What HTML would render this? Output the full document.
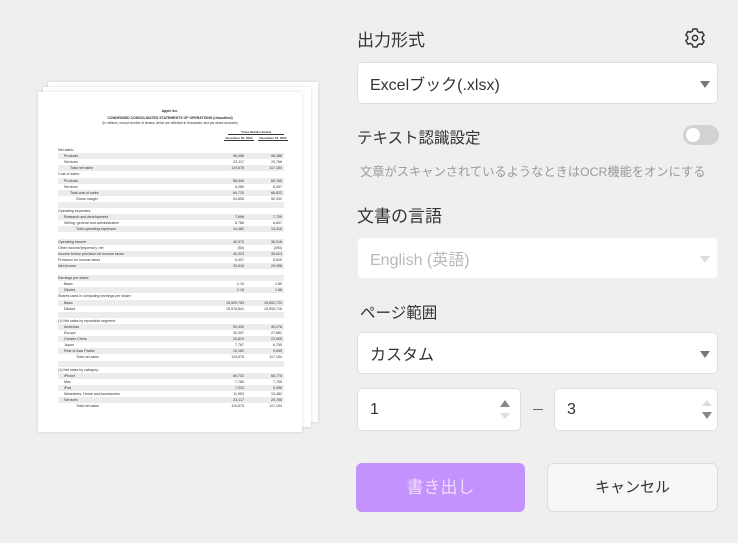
<!DOCTYPE html>
<html><head><meta charset="utf-8"><style>
body{margin:0;width:738px;height:543px;background:#efefef;font-family:"Liberation Sans","Noto Sans CJK JP",sans-serif;position:relative;overflow:hidden;color:#333}
.a{position:absolute}
.lbl{font-size:15.5px;color:#333;left:357px}
.box{position:absolute;background:#fff;border:1px solid #dedede;border-radius:5px;box-sizing:border-box}
.box span{position:absolute;left:12px;top:50%;transform:translateY(-50%);font-size:16px}
.tri{position:absolute;width:0;height:0;border-left:5px solid transparent;border-right:5px solid transparent;border-top:7px solid #777}
.pg{position:absolute;background:#fff;box-shadow:0 0 3px rgba(0,0,0,.15)}
.r{position:absolute;left:20px;width:226px;height:6px;font-size:3.6px;line-height:6px;color:#333}
.r.g{background:#ececec}
.r b{position:absolute;font-weight:normal}
</style></head><body>
<div class="pg" style="left:48px;top:82px;width:270px;height:340px"></div>
<div class="pg" style="left:43px;top:87px;width:268px;height:340px"></div>
<div class="pg" style="left:38px;top:92px;width:264px;height:340px">
<div class="a" style="left:0;width:264px;top:17px;text-align:center;font-size:3.5px;font-weight:bold">Apple Inc.</div>
<div class="a" style="left:0;width:264px;top:24px;text-align:center;font-size:3.5px;font-weight:bold">CONDENSED CONSOLIDATED STATEMENTS OF OPERATIONS (Unaudited)</div>
<div class="a" style="left:0;width:264px;top:29px;text-align:center;font-size:3.2px">(In millions, except number of shares, which are reflected in thousands, and per-share amounts)</div>
<div class="a" style="left:190px;top:38px;width:56px;border-bottom:.5px solid #333;font-size:3px;text-align:center;font-weight:bold">Three Months Ended</div>
<div class="a" style="left:186px;top:44px;width:30px;border-bottom:.5px solid #333;font-size:3px;text-align:center;font-weight:bold">December 30, 2023</div>
<div class="a" style="left:220px;top:44px;width:30px;border-bottom:.5px solid #333;font-size:3px;text-align:center;font-weight:bold">December 31, 2022</div>
<div id="rows"></div>
</div>
<div class="a lbl" style="top:26px;font-size:17px">出力形式</div>
<svg class="a" style="left:683px;top:26px" width="24" height="24" viewBox="0 0 24 24" fill="none" stroke="#333" stroke-width="1.5"><path d="M10 3h4l.6 2.4 2.1 1.2 2.4-.7 2 3.4-1.8 1.7v2.4l1.8 1.7-2 3.4-2.4-.7-2.1 1.2L14 21h-4l-.6-2.4-2.1-1.2-2.4.7-2-3.4 1.8-1.7v-2.4L2.9 8.9l2-3.4 2.4.7 2.1-1.2z" stroke-linejoin="round"/><circle cx="12" cy="12" r="2.6"/></svg>
<div class="box" style="left:357px;top:62px;width:361px;height:42px"><span>Excelブック(.xlsx)</span><div class="tri" style="right:7px;top:18px"></div></div>
<div class="a lbl" style="top:126px">テキスト認識設定</div>
<div class="a" style="left:683px;top:125px;width:36px;height:20px;border-radius:10px;background:#d2d2d2"><div class="a" style="left:3px;top:3px;width:14px;height:14px;border-radius:7px;background:#fff"></div></div>
<div class="a" style="left:360px;top:162px;font-size:12.25px;color:#9a9a9a">文章がスキャンされているようなときはOCR機能をオンにする</div>
<div class="a lbl" style="top:202px;font-size:17px">文書の言語</div>
<div class="box" style="left:357px;top:237px;width:361px;height:42px;border-color:#f3f3f3"><span style="color:#b8b8b8">English (英語)</span><div class="tri" style="right:7px;top:18px;border-top-color:#ddd"></div></div>
<div class="a lbl" style="top:301px;left:360px">ページ範囲</div>
<div class="box" style="left:357px;top:332px;width:361px;height:42px"><span>カスタム</span><div class="tri" style="right:7px;top:18px"></div></div>
<div class="box" style="left:357px;top:388px;width:164px;height:43px"><span>1</span>
<div class="a" style="right:10px;top:11px;border-left:5px solid transparent;border-right:5px solid transparent;border-bottom:7px solid #888"></div>
<div class="a" style="right:10px;top:24px;border-left:5px solid transparent;border-right:5px solid transparent;border-top:6px solid #ddd"></div></div>
<div class="a" style="left:533px;top:409px;width:10px;height:1px;background:#666"></div>
<div class="box" style="left:554px;top:388px;width:164px;height:43px"><span>3</span>
<div class="a" style="right:5px;top:11px;border-left:5px solid transparent;border-right:5px solid transparent;border-bottom:6px solid #ddd"></div>
<div class="a" style="right:5px;top:23px;border-left:5px solid transparent;border-right:5px solid transparent;border-top:7px solid #888"></div></div>
<div class="a" style="left:356px;top:463px;width:169px;height:49px;background:#c392fc;border-radius:6px;color:#eedcff;font-size:17px;text-align:center;line-height:49px">書き出し</div>
<div class="a" style="left:547px;top:463px;width:171px;height:49px;background:#f6f5f7;border:1px solid #dcdcdc;box-sizing:border-box;border-radius:6px;font-size:15px;text-align:center;line-height:47px">キャンセル</div>
<script>
var R=[["Net sales:",0,"",""],["Products",1,"96,458","96,388",1],["Services",1,"23,117","20,766"],["Total net sales",2,"119,575","117,154",1],["Cost of sales:",0,"",""],["Products",1,"58,440","60,765",1],["Services",1,"6,280","6,057"],["Total cost of sales",2,"64,720","66,822",1],["Gross margin",3,"54,855","50,332"],["",0,"","",1],["Operating expenses:",0,"",""],["Research and development",1,"7,696","7,709",1],["Selling, general and administrative",1,"6,786","6,607"],["Total operating expenses",3,"14,482","14,316",1],["",0,"",""],["Operating income",0,"40,373","36,016",1],["Other income/(expense), net",0,"(50)","(393)"],["Income before provision for income taxes",0,"40,323","35,623",1],["Provision for income taxes",0,"6,407","5,625"],["Net income",0,"33,916","29,998",1],["",0,"",""],["Earnings per share:",0,"","",1],["Basic",1,"2.19","1.89"],["Diluted",1,"2.18","1.88",1],["Shares used in computing earnings per share:",0,"",""],["Basic",1,"15,509,763","15,892,723",1],["Diluted",1,"15,576,641","15,955,718"],["",0,"","",1],["(1) Net sales by reportable segment:",0,"",""],["Americas",1,"50,430","49,278",1],["Europe",1,"30,397","27,681"],["Greater China",1,"20,819","23,905",1],["Japan",1,"7,767","6,755"],["Rest of Asia Pacific",1,"10,162","9,535",1],["Total net sales",3,"119,575","117,154"],["",0,"","",1],["(1) Net sales by category:",0,"",""],["iPhone",1,"69,702","65,775",1],["Mac",1,"7,780","7,735"],["iPad",1,"7,023","9,396",1],["Wearables, Home and Accessories",1,"11,953","13,482"],["Services",1,"23,117","20,766",1],["Total net sales",3,"119,575","117,154"]];
var h="";R.forEach(function(r,i){h+='<div class="r'+(r[4]?' g':'')+'" style="top:'+(55+i*6.1)+'px"><b style="left:'+(r[1]*6)+'px">'+r[0]+'</b><b style="right:40px">'+r[2]+'</b><b style="right:2px">'+r[3]+'</b></div>'});document.getElementById("rows").innerHTML=h;
</script>
</body></html>
